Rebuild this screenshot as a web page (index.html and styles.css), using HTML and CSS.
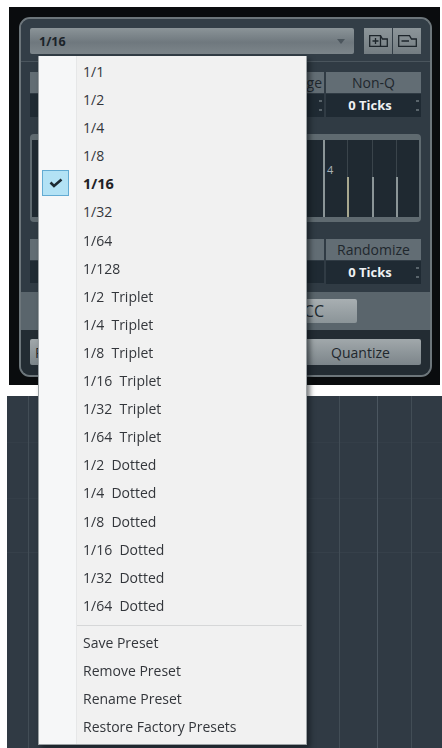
FILE: index.html
```html
<!DOCTYPE html>
<html lang="en">
<head>
<meta charset="utf-8">
<title>Quantize Panel</title>
<link rel="stylesheet" href="styles.css">
</head>
<body>
<div class="stage">
  <section class="frame">
    <div class="panel">
      <div class="preset-row">
        <div class="combo"><span>1/16</span><svg class="caret" width="8" height="5" viewBox="0 0 8 5"><path d="M0 0h8L4 5z"/></svg></div>
        <div class="tool-group">
          <button class="tool"><svg width="19" height="12" viewBox="0 0 19 12"><path d="M.7.7H11.500L13.500 4H18.300V11.300H.7z"/><path d="M3.500 6H9.500M6.500 3V9M11.500.7V11.300"/></svg></button>
          <button class="tool"><svg width="19" height="12" viewBox="0 0 19 12"><path d="M.7.7H11.500L13.500 4H18.300V11.300H.7z"/><path d="M3.500 6H11"/></svg></button>
        </div>
      </div>
      <div class="params">
        <div class="param param-wide"><div class="param-label"></div><div class="param-value"></div></div>
        <div class="param param-mid"><div class="param-label right">Range</div><div class="param-value"><i class="spin"></i></div></div>
        <div class="param param-end"><div class="param-label">Non-Q</div><div class="param-value"><b>0 Ticks</b><i class="spin"></i></div></div>
      </div>
      <div class="grid-box">
        <div class="grid-inner">
          <span class="tall"></span><span class="beat b1"></span><span class="beat b2"></span><span class="beat b3"></span>
          <em class="beat-num">4</em>
        </div>
      </div>
      <div class="params params-low">
        <div class="param param-wide"><div class="param-label"></div><div class="param-value"></div></div>
        <div class="param param-end"><div class="param-label">Randomize</div><div class="param-value"><b>0 Ticks</b><i class="spin"></i></div></div>
      </div>
      <div class="cc-band"><button class="cc">CC</button></div>
      <div class="actions">
        <button class="act act-left">Reset</button>
        <button class="act act-right">Quantize</button>
      </div>
    </div>
  </section>
  <section class="arrange"></section>

  <nav class="menu">
    <ul class="items">
      <li>1/1</li><li>1/2</li><li>1/4</li><li>1/8</li>
      <li class="checked"><span class="tick"><svg width="14" height="10" viewBox="0 0 14 10"><path d="M1.500 4.500 5 8 12.500 1.500"/></svg></span>1/16</li>
      <li>1/32</li><li>1/64</li><li>1/128</li>
      <li>1/2&nbsp; Triplet</li><li>1/4&nbsp; Triplet</li><li>1/8&nbsp; Triplet</li><li>1/16&nbsp; Triplet</li><li>1/32&nbsp; Triplet</li><li>1/64&nbsp; Triplet</li>
      <li>1/2&nbsp; Dotted</li><li>1/4&nbsp; Dotted</li><li>1/8&nbsp; Dotted</li><li>1/16&nbsp; Dotted</li><li>1/32&nbsp; Dotted</li><li>1/64&nbsp; Dotted</li>
    </ul>
    <hr class="rule">
    <ul class="items">
      <li>Save Preset</li><li>Remove Preset</li><li>Rename Preset</li><li>Restore Factory Presets</li>
    </ul>
  </nav>
</div>
</body>
</html>
```
FILE: styles.css
```css
* { box-sizing: border-box; }
html, body { margin: 0; height: 100%; background: #fff; overflow: hidden; }
button { font: inherit; margin: 0; padding: 0; border: 0; }
ul { list-style: none; margin: 0; padding: 0; }

.stage { position: relative; width: 442px; height: 748px; padding-top: 7px; font-family: "Open Sans", sans-serif; filter: blur(0.55px); }

.frame { width: 431px; height: 378px; margin-left: 9px; padding: 10px 8px 8px 10px; background: #0a0c0e; }
.panel { height: 360px; border: 2px solid #6d767b; border-radius: 11px; background: #303b44; overflow: hidden; display: flex; flex-direction: column; }

.preset-row { height: 43px; padding: 9px 9px 0; display: flex; justify-content: space-between; border-bottom: 1px solid #4a555d; background: #333e47; flex: none; }
.combo { width: 324px; height: 26px; padding: 0 9px; display: flex; align-items: center; justify-content: space-between; background: linear-gradient(#8b9498, #6f787e 55%, #7c858a); border-radius: 2px; font-size: 12.500px; font-weight: 700; color: #1b2329; }
.caret { fill: #4c565d; }
.tool-group { display: flex; gap: 1px; }
.tool { width: 28px; height: 26px; display: flex; align-items: center; justify-content: center; background: linear-gradient(#8c9599, #747d82); }
.tool svg { fill: none; stroke: #1d252b; stroke-width: 1.300; }

.params { margin-top: 10px; padding: 0 9px; display: flex; height: 45px; flex: none; }
.params-low { margin-top: 17px; height: 44px; }
.param { display: flex; flex-direction: column; gap: 1px; }
.param-wide { width: 120px; }
.param-mid { flex: 1; }
.param-end { width: 95px; margin-left: 2px; }
.params-low .param-wide { flex: 1; width: auto; }
.param-label { height: 21px; flex: none; background: #626d74; color: #1f272d; font-size: 14px; line-height: 21px; text-align: center; }
.param-label.right { text-align: right; padding-right: 2px; }
.param-value { position: relative; flex: 1; padding-right: 7px; background: #1f2a33; color: #eef1f2; font-size: 13px; line-height: 23px; text-align: center; }
.param-value b { font-weight: 700; }
.spin { position: absolute; right: 2px; top: 6px; width: 3px; height: 11px; border-top: 2px solid #59646b; border-bottom: 2px solid #59646b; }

.grid-box { margin: 17px 9px 0; height: 88px; flex: none; border: 2px solid #5f6a70; border-top-width: 6px; border-bottom-width: 5px; border-radius: 4px; background: #1f2931; }
.grid-inner { position: relative; height: 100%; }
.tall, .beat { position: absolute; bottom: 0; width: 2px; background: #8b9597; }
.tall { left: 291px; top: 0; }
.beat { top: 37px; }
.beat::before { content: ""; position: absolute; left: 0; bottom: 100%; width: 1px; height: 37px; background: #3a444b; }
.b1 { left: 315px; background: #a8a88f; }
.b2 { left: 340px; }
.b3 { left: 364px; }
.beat-num { position: absolute; left: 295px; top: 22px; font: 11px "Open Sans", sans-serif; color: #aab2b6; }

.cc-band { margin-top: 9px; height: 38px; flex: none; padding: 7px 73px 0 0; display: flex; justify-content: flex-end; background: #5a656c; }
.cc { width: 100px; height: 24px; text-align: right; padding-right: 33px; background: linear-gradient(#a8afb2, #8b9498); color: #20282e; font-size: 16px; border-radius: 2px; }

.actions { flex: 1; padding: 9px 9px 0; display: flex; justify-content: space-between; background: #232c33; }
.act { height: 26px; background: linear-gradient(#a1a8ab, #7c858a); color: #1f272d; font-size: 14px; border-radius: 2px; }
.act-left { width: 120px; text-align: left; padding-left: 5px; }
.act-right { width: 121px; }

.arrange { height: 352px; margin: 11px 0 0 7px; background-color: #303a44;
  background-image:
    linear-gradient(90deg, transparent 21px, #424d56 21px, #424d56 22px, transparent 22px),
    linear-gradient(90deg, transparent 332px, #424d56 332px, #424d56 333px, transparent 333px),
    linear-gradient(90deg, transparent 370px, #4b5660 370px, #4b5660 371px, transparent 371px),
    linear-gradient(90deg, transparent 404px, #424d56 404px, #424d56 405px, transparent 405px),
    linear-gradient(transparent 46px, #343e48 46px, #343e48 47px, transparent 47px),
    linear-gradient(transparent 102px, #343e48 102px, #343e48 103px, transparent 103px),
    linear-gradient(transparent 156px, #36404a 156px, #36404a 157px, transparent 157px);
}

.menu { position: absolute; left: 38px; top: 56px; width: 269px; height: 689px; padding: 2px 0 0; background: linear-gradient(90deg, #f6f7f8 37px, #e6e7e8 37px, #e6e7e8 38px, #f1f1f1 38px); border: 1px solid #9ba1a4; border-top: 0; box-shadow: 3px 3px 5px rgba(10, 14, 18, .55); }
.items li { position: relative; height: 28.100px; padding-left: 44px; font-size: 14px; line-height: 28px; color: #33363b; white-space: nowrap; }
.items li.checked { font-weight: 700; color: #1f2226; font-size: 14.500px; }
.tick { position: absolute; left: 3px; top: 0; width: 27px; height: 26px; display: flex; align-items: center; justify-content: center; background: #b3e2f5; border: 1px solid #63abd3; }
.tick svg { fill: none; stroke: #1d2a33; stroke-width: 2.600; }
.rule { margin: 5px 4px 3px 38px; height: 1px; border: 0; background: #d6d7d8; }
```
